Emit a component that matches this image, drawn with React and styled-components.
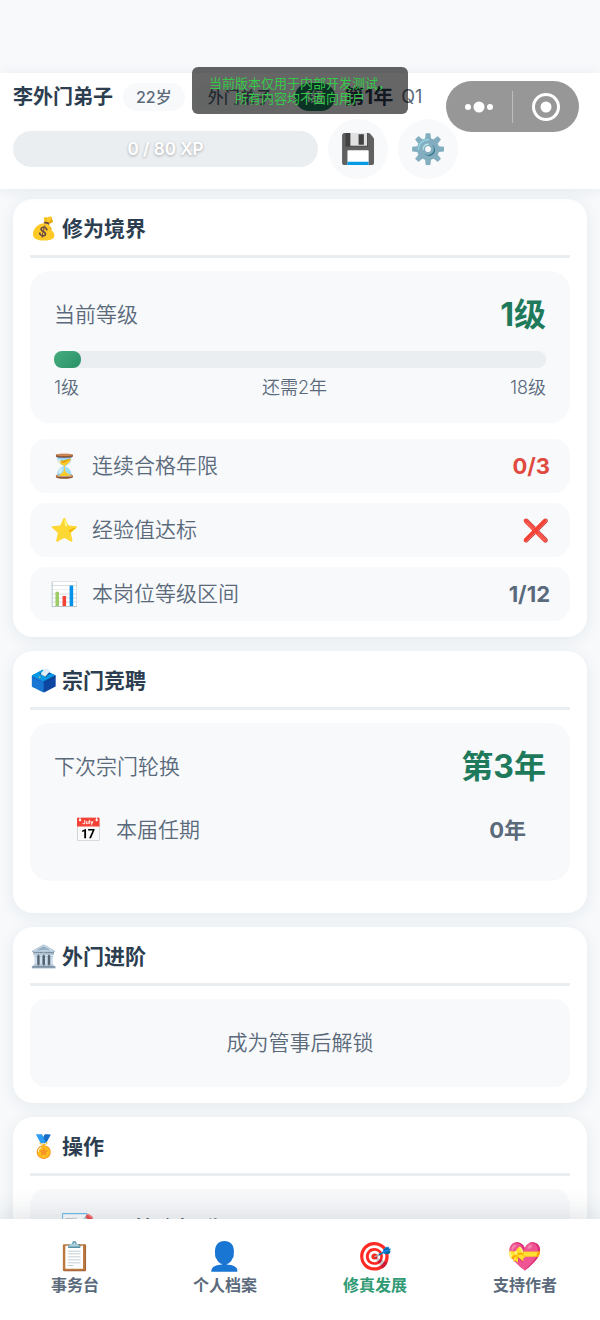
import React, { useState } from "react";
import styled, { createGlobalStyle } from "styled-components";

const COLORS = {
    BAR: "#ebeef0",
    GREEN: "#1f7a5c",
    GREEN_LIGHT: "#2f9a74",
    INK: "#2c3e50",
    MUTED: "#5a6a7b",
    PANEL: "#f8f9fb",
    RED: "#e04a3f",
    WHITE: "#ffffff",
};

const GlobalStyle = createGlobalStyle`
    * {
        box-sizing: border-box;
    }

    body {
        background: #f7f9fb;
        color: ${COLORS.INK};
        font-family: Inter, "Noto Sans CJK SC", "Noto Color Emoji", sans-serif;
        margin: 0;
    }

    button {
        border: 0;
        cursor: pointer;
        font-family: inherit;
        padding: 0;
    }

    h2,
    p {
        margin: 0;
    }
`;

const Page = styled("div")`
    display: flex;
    flex-direction: column;
    height: 100vh;
    overflow: hidden;
    padding-top: 73px;
`;

const Header = styled("header")`
    background: ${COLORS.WHITE};
    box-shadow: 0 2px 14px rgba(44, 62, 80, 0.08);
    flex: none;
    padding: 10px 13px;
    z-index: 1;
`;

const HeaderRow = styled("div")`
    align-items: center;
    display: flex;
    gap: ${(props) => props.$gap || 10}px;
`;

const Name = styled("span")`
    font-size: 20px;
    font-weight: 700;
    line-height: 28px;
`;

const Pill = styled("span")`
    background: ${(props) => (props.$active ? COLORS.GREEN : COLORS.PANEL)};
    border-radius: 14px;
    color: ${(props) => (props.$active ? COLORS.WHITE : COLORS.MUTED)};
    font-size: ${(props) => (props.$active ? 14 : 16)}px;
    font-weight: 500;
    line-height: 28px;
    padding: 0 ${(props) => (props.$active ? 10 : 13)}px;
`;

const Quarter = styled("span")`
    color: ${COLORS.MUTED};
    font-size: 18px;
    line-height: 28px;
`;

const XpRow = styled(HeaderRow)`
    margin-top: 8px;
    width: 445px;
    max-width: 100%;
`;

const XpBar = styled("div")`
    background: ${COLORS.BAR};
    border-radius: 18px;
    color: ${COLORS.WHITE};
    flex: 1;
    font-size: 17px;
    font-weight: 600;
    line-height: 36px;
    text-align: center;
    text-shadow: 0 1px 3px rgba(0, 0, 0, 0.3);
`;

const RoundButton = styled("button")`
    align-items: center;
    background: ${COLORS.PANEL};
    border-radius: 50%;
    display: flex;
    font-size: 30px;
    height: 60px;
    justify-content: center;
    width: 60px;
`;

const Toast = styled("div")`
    background: rgba(0, 0, 0, 0.6);
    border-radius: 6px;
    color: #35c94a;
    font-size: 13px;
    left: 50%;
    line-height: 15px;
    padding: 9px 14px 8px;
    position: absolute;
    text-align: center;
    top: 67px;
    transform: translateX(-50%);
    white-space: nowrap;
    width: 216px;
    z-index: 3;
`;

const Capsule = styled("div")`
    align-items: center;
    background: #979797;
    border-radius: 26px;
    display: grid;
    grid-template-columns: 1fr 1px 1fr;
    height: 51px;
    position: absolute;
    right: 21px;
    top: 81px;
    width: 133px;
    z-index: 3;
`;

const CapsuleButton = styled("button")`
    align-items: center;
    background: transparent;
    display: flex;
    height: 51px;
    justify-content: center;
`;

const CapsuleLine = styled("span")`
    background: #bdbdbd;
    height: 32px;
`;

const Content = styled("main")`
    display: flex;
    flex: 1;
    flex-direction: column;
    gap: 14px;
    min-height: 0;
    overflow: hidden;
    padding: 10px 13px 0;
`;

const Card = styled("section")`
    background: ${COLORS.WHITE};
    border-radius: 20px;
    box-shadow: 0 3px 16px rgba(44, 62, 80, 0.08);
    flex: none;
    padding: 16px 17px;
`;

const CardTitle = styled("h2")`
    align-items: center;
    border-bottom: 3px solid ${COLORS.BAR};
    display: flex;
    font-size: 21px;
    font-weight: 700;
    gap: 6px;
    line-height: 28px;
    margin-bottom: 13px;
    padding-bottom: 12px;
`;

const Emoji = styled("span")`
    display: inline-block;
    font-family: "Noto Color Emoji";
    font-size: ${(props) => props.$size}px;
    line-height: 1;
    text-align: center;
    width: ${(props) => props.$width}px;
`;

const Panel = styled("div")`
    background: ${COLORS.PANEL};
    border-radius: 20px;
    margin-bottom: ${(props) => props.$gap || 0}px;
    padding: 24px;
`;

const PanelHead = styled("div")`
    align-items: center;
    display: flex;
    font-size: 21px;
    justify-content: space-between;
    line-height: 40px;
    margin-bottom: 16px;
`;

const Label = styled("span")`
    color: ${COLORS.MUTED};
    font-weight: 350;
`;

const Level = styled("strong")`
    color: ${COLORS.GREEN};
    font-size: 32px;
    font-weight: 700;
`;

const Track = styled("div")`
    background: ${COLORS.BAR};
    border-radius: 8px;
    height: 17px;
    margin-bottom: 9px;
`;

const Fill = styled("div")`
    background: linear-gradient(135deg, #46ad80, #2a9068);
    border-radius: 8px;
    height: 100%;
`;

const Scale = styled("div")`
    color: ${COLORS.MUTED};
    display: flex;
    font-size: 18px;
    font-weight: 350;
    justify-content: space-between;
    line-height: 22px;
`;

const Rows = styled("div")`
    display: grid;
    gap: 10px;
`;

const Row = styled("div")`
    align-items: center;
    background: ${COLORS.PANEL};
    border-radius: 16px;
    display: flex;
    font-size: 21px;
    gap: 14px;
    line-height: 30px;
    padding: 12px 20px;
`;

const Value = styled("strong")`
    color: ${(props) => (props.$bad ? COLORS.RED : COLORS.MUTED)};
    font-size: 22px;
    font-weight: 700;
    margin-left: auto;
`;

const Locked = styled("p")`
    background: ${COLORS.PANEL};
    border-radius: 16px;
    color: ${COLORS.MUTED};
    font-size: 21px;
    font-weight: 350;
    line-height: 40px;
    padding: 24px;
    text-align: center;
`;

const ActionButton = styled("button")`
    align-items: center;
    background: ${COLORS.PANEL};
    border-radius: 16px;
    color: ${COLORS.INK};
    display: flex;
    font-size: 22px;
    font-weight: 700;
    gap: 18px;
    line-height: 32px;
    padding: 24px 30px;
    width: 100%;
`;

const Nav = styled("nav")`
    background: ${COLORS.WHITE};
    box-shadow: 0 -4px 26px rgba(44, 62, 80, 0.16);
    display: grid;
    flex: none;
    grid-template-columns: repeat(4, 1fr);
    height: 101px;
    padding: 24px 0 18px;
    z-index: 1;
`;

const NavButton = styled("button")`
    align-items: center;
    background: transparent;
    color: ${(props) => (props.$active ? COLORS.GREEN_LIGHT : COLORS.MUTED)};
    display: flex;
    flex-direction: column;
    font-size: 16px;
    font-weight: 700;
    gap: 2px;
    line-height: 24px;
`;

const REQUIREMENTS = [
    { icon: "⏳", title: "连续合格年限", value: "0/3", bad: true },
    { icon: "⭐", title: "经验值达标", value: "❌", bad: true },
    { icon: "📊", title: "本岗位等级区间", value: "1/12" },
];

const TABS = [
    { icon: "📋", title: "事务台" },
    { icon: "👤", title: "个人档案" },
    { icon: "🎯", title: "修真发展" },
    { icon: "💝", title: "支持作者" },
];

const Title = ({ icon, children }) => (
    <CardTitle>
        <Emoji $size={22} $width={26}>
            {icon}
        </Emoji>
        {children}
    </CardTitle>
);

const InfoRow = ({ icon, title, value, bad }) => (
    <Row>
        <Emoji $size={23} $width={28}>
            {icon}
        </Emoji>
        <Label>{title}</Label>
        <Value $bad={bad}>{value}</Value>
    </Row>
);

const App = () => {
    const [tab, setTab] = useState(2);

    return (
        <Page>
            <GlobalStyle />
            <Header>
                <HeaderRow>
                    <Name>李外门弟子</Name>
                    <Pill>22岁</Pill>
                    <Pill>外门弟子</Pill>
                    <Pill $active>1级</Pill>
                    <HeaderRow $gap={8}>
                        <Name>第1年</Name>
                        <Quarter>Q1</Quarter>
                    </HeaderRow>
                </HeaderRow>
                <XpRow>
                    <XpBar>0 / 80 XP</XpBar>
                    <RoundButton aria-label="存档">
                        <Emoji $size={29} $width={36}>
                            💾
                        </Emoji>
                    </RoundButton>
                    <RoundButton aria-label="设置">
                        <Emoji $size={29} $width={36}>
                            ⚙️
                        </Emoji>
                    </RoundButton>
                </XpRow>
            </Header>
            <Toast>
                当前版本仅用于内部开发测试，
                <br />
                所有内容均不面向用户
            </Toast>
            <Capsule>
                <CapsuleButton aria-label="更多">
                    <svg width="30" height="12" viewBox="0 0 30 12" fill="#fff">
                        <circle cx="4" cy="6" r="3" />
                        <circle cx="15" cy="6" r="5.5" />
                        <circle cx="26" cy="6" r="3" />
                    </svg>
                </CapsuleButton>
                <CapsuleLine />
                <CapsuleButton aria-label="关闭">
                    <svg width="30" height="30" viewBox="0 0 30 30">
                        <circle cx="15" cy="15" r="12.5" fill="none" stroke="#fff" strokeWidth="3" />
                        <circle cx="15" cy="15" r="5.5" fill="#fff" />
                    </svg>
                </CapsuleButton>
            </Capsule>
            <Content>
                <Card>
                    <Title icon="💰">修为境界</Title>
                    <Panel $gap={16}>
                        <PanelHead>
                            <Label>当前等级</Label>
                            <Level>1级</Level>
                        </PanelHead>
                        <Track>
                            <Fill style={{ width: `${(1 / 18) * 100}%` }} />
                        </Track>
                        <Scale>
                            <span>1级</span>
                            <span>还需2年</span>
                            <span>18级</span>
                        </Scale>
                    </Panel>
                    <Rows>
                        {REQUIREMENTS.map((r) => (
                            <InfoRow key={r.title} {...r} />
                        ))}
                    </Rows>
                </Card>
                <Card>
                    <Title icon="🗳️">宗门竞聘</Title>
                    <Panel $gap={16}>
                        <PanelHead>
                            <Label>下次宗门轮换</Label>
                            <Level>第3年</Level>
                        </PanelHead>
                        <InfoRow icon="📅" title="本届任期" value="0年" />
                    </Panel>
                </Card>
                <Card>
                    <Title icon="🏛️">外门进阶</Title>
                    <Locked>成为管事后解锁</Locked>
                </Card>
                <Card>
                    <Title icon="🏅">操作</Title>
                    <ActionButton>
                        <Emoji $size={28} $width={34}>
                            📝
                        </Emoji>
                        已符合提升
                    </ActionButton>
                </Card>
            </Content>
            <Nav>
                {TABS.map((t, idx) => (
                    <NavButton
                        key={t.title}
                        $active={idx === tab}
                        onClick={() => setTab(idx)}
                    >
                        <Emoji $size={28} $width={36}>
                            {t.icon}
                        </Emoji>
                        {t.title}
                    </NavButton>
                ))}
            </Nav>
        </Page>
    );
};

export default App;
